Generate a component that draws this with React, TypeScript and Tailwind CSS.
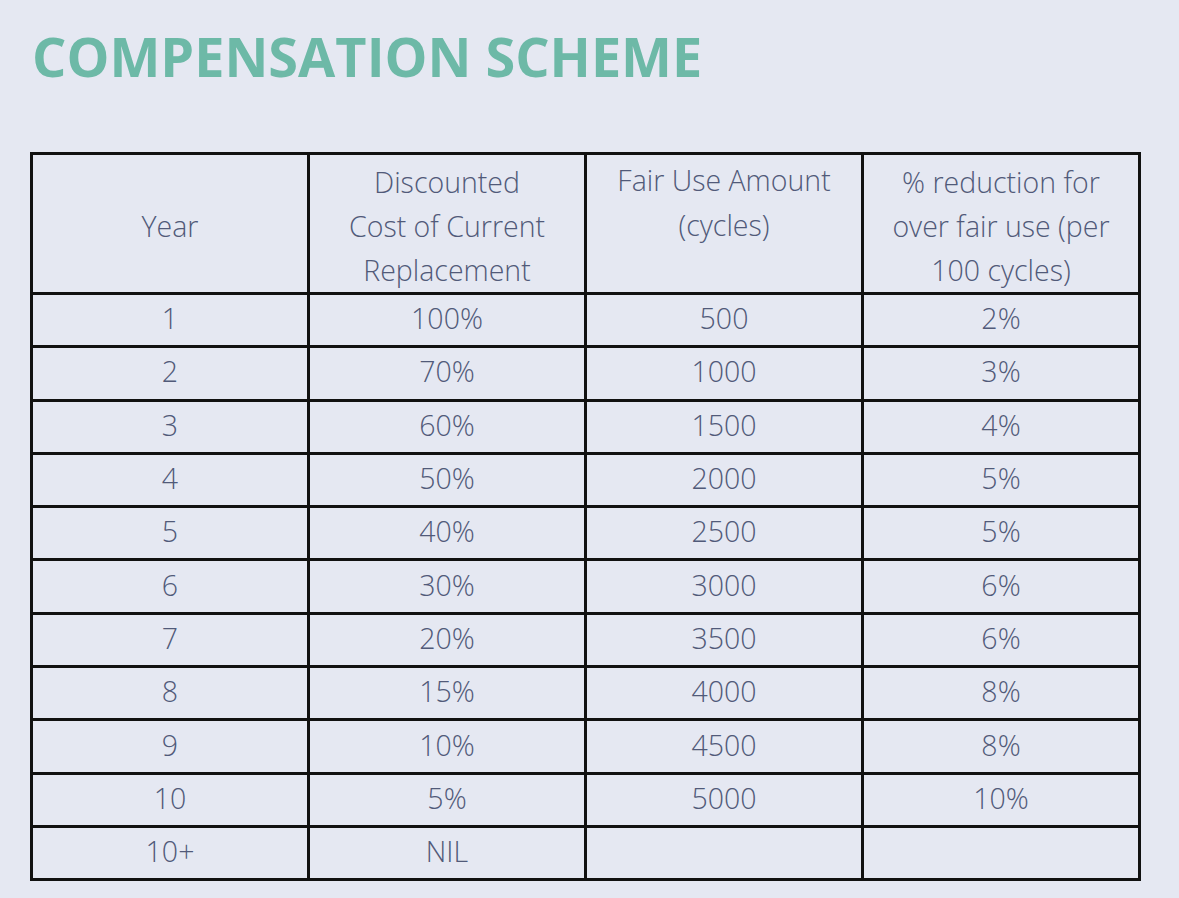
import React from "react";

const rows: [string, string, string, string][] = [
  ["1", "100%", "500", "2%"],
  ["2", "70%", "1000", "3%"],
  ["3", "60%", "1500", "4%"],
  ["4", "50%", "2000", "5%"],
  ["5", "40%", "2500", "5%"],
  ["6", "30%", "3000", "6%"],
  ["7", "20%", "3500", "6%"],
  ["8", "15%", "4000", "8%"],
  ["9", "10%", "4500", "8%"],
  ["10", "5%", "5000", "10%"],
  ["10+", "NIL", "", ""],
];

export default function App() {
  return (
    <div
      className="w-[1179px] h-[898px] bg-[#e5e8f2] overflow-hidden"
      style={{ fontFamily: '"Open Sans", "Noto Sans", sans-serif' }}
    >
      <div className="pt-[29px] pl-[32px]">
        <h1 className="text-[54px] leading-none font-bold text-[#6db9a7]">
          COMPENSATION SCHEME
        </h1>
      </div>
      <div className="pl-[30px] pt-[69px]">
        <table className="w-[1111px] table-fixed border-collapse border-[3px] border-[#111] text-[#515a79] font-light text-[28.5px]">
          <tbody>
            <tr className="h-[137px]">
              <td className="border-[3px] border-[#111] text-center leading-[44px] align-middle pt-[5px] pb-0">Year</td>
              <td className="border-[3px] border-[#111] text-center leading-[44px] align-middle pt-[5px] pb-0">
                Discounted<br />Cost of Current<br />Replacement
              </td>
              <td className="border-[3px] border-[#111] text-center leading-[45px] align-top pt-[3px]">
                Fair Use Amount<br />(cycles)
              </td>
              <td className="border-[3px] border-[#111] text-center leading-[44px] align-middle pt-[5px] pb-0">
                % reduction for<br />over fair use (per<br />100 cycles)
              </td>
            </tr>
            {rows.map((r, i) => (
              <tr key={i} className="h-[53.3px]">
                {r.map((c, j) => (
                  <td key={j} className="border-[3px] border-[#111] text-center leading-[45px] align-middle pb-[3px]">
                    {c}
                  </td>
                ))}
              </tr>
            ))}
          </tbody>
        </table>
      </div>
    </div>
  );
}
